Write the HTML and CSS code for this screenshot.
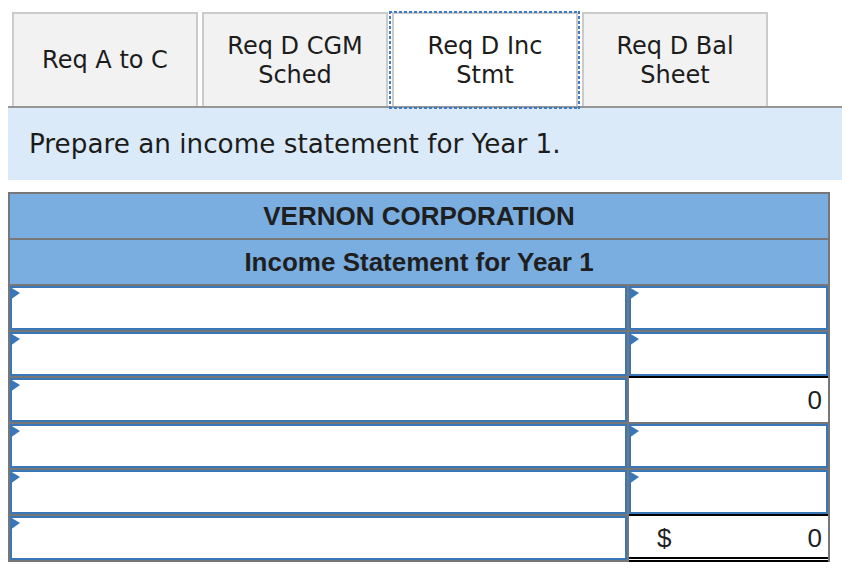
FILE: index.html
```html
<!DOCTYPE html>
<html>
<head>
<meta charset="utf-8">
<title>Income Statement</title>
<link rel="stylesheet" href="styles.css">
</head>
<body>
<div class="tabs">
  <div class="tab">Req A to C</div>
  <div class="tab">Req D CGM<br>Sched</div>
  <div class="tab active">Req D Inc<br>Stmt</div>
  <div class="tab">Req D Bal<br>Sheet</div>
</div>
<div class="prompt">Prepare an income statement for Year 1.</div>
<div class="stmt">
  <div class="hdr">VERNON CORPORATION</div>
  <div class="hdr">Income Statement for Year 1</div>

  <div class="cell"><div class="inp"><span class="tri"></span></div></div>
  <div class="cell"><div class="inp"><span class="tri"></span></div></div>

  <div class="cell"><div class="inp"><span class="tri"></span></div></div>
  <div class="cell"><div class="inp"><span class="tri"></span></div></div>

  <div class="cell"><div class="inp"><span class="tri"></span></div></div>
  <div class="cell amt sub"><span>0</span></div>

  <div class="cell"><div class="inp"><span class="tri"></span></div></div>
  <div class="cell"><div class="inp"><span class="tri"></span></div></div>

  <div class="cell"><div class="inp"><span class="tri"></span></div></div>
  <div class="cell"><div class="inp"><span class="tri"></span></div></div>

  <div class="cell"><div class="inp"><span class="tri"></span></div></div>
  <div class="cell amt total"><span>$</span><span>0</span></div>
</div>
</body>
</html>
```
FILE: styles.css
```css
body {
  margin: 8px 0 0 8px;
  font-family: "DejaVu Sans", Verdana, sans-serif;
  color: #1c1c1c;
  background: #fff;
}

.tabs {
  display: flex;
  gap: 4px;
  padding: 4px 0 0 4px;
  border-bottom: 2px solid #969696;
}

.tab {
  width: 186px;
  height: 94px;
  box-sizing: border-box;
  border: 2px solid #cbcbcb;
  border-bottom: none;
  background: #f2f2f2;
  display: flex;
  align-items: center;
  justify-content: center;
  text-align: center;
  font-size: 24px;
  line-height: 29px;
  padding-top: 1px;
}

.tab.active {
  background: #fff;
  position: relative;
}

.tab.active::after {
  content: "";
  position: absolute;
  top: -3px;
  left: -5px;
  right: -4px;
  bottom: -3px;
  background:
    repeating-linear-gradient(90deg, #3d7bc6 0 3px, transparent 3px 5px) top left / 100% 2px no-repeat,
    repeating-linear-gradient(90deg, #3d7bc6 0 3px, transparent 3px 5px) bottom left / 100% 2px no-repeat,
    repeating-linear-gradient(180deg, #3d7bc6 0 3px, transparent 3px 5px) top left / 2px 100% no-repeat,
    repeating-linear-gradient(180deg, #3d7bc6 0 3px, transparent 3px 5px) top right / 2px 100% no-repeat;
}

.prompt {
  height: 72px;
  background: #dbeaf8;
  padding-left: 21px;
  display: flex;
  align-items: center;
  font-size: 26.25px;
}

.stmt {
  margin-top: 12px;
  width: 822px;
  box-sizing: border-box;
  border: 2px solid #777;
  background: #777;
  display: grid;
  grid-template-columns: 617px 199px;
  grid-auto-rows: 44px;
  gap: 2px;
}

.hdr {
  grid-column: 1 / -1;
  background: #7aaee1;
  font-family: "Liberation Sans", Arial, sans-serif;
  font-weight: bold;
  font-size: 26px;
  color: #1f1f1f;
  display: flex;
  align-items: center;
  justify-content: center;
}

.cell {
  background: #fff;
}

.inp {
  height: 100%;
  box-sizing: border-box;
  border: 2px solid #3a77b8;
  position: relative;
}

.tri {
  position: absolute;
  left: -2px;
  top: -1px;
  width: 0;
  height: 0;
  border-left: 10px solid #3a77b8;
  border-top: 6px solid transparent;
  border-bottom: 7px solid transparent;
}

.amt {
  display: flex;
  align-items: center;
  justify-content: space-between;
  padding: 0 6px 0 28px;
  font-family: "Liberation Sans", Arial, sans-serif;
  font-size: 26px;
  color: #1f1f1f;
}

.amt.sub {
  justify-content: flex-end;
  box-shadow: 0 -2px 0 #000;
}

.amt.total {
  box-shadow: 0 -2px 0 #000, 0 2px 0 #000, inset 0 -1px 0 #fff, inset 0 -3px 0 #000;
}
```
